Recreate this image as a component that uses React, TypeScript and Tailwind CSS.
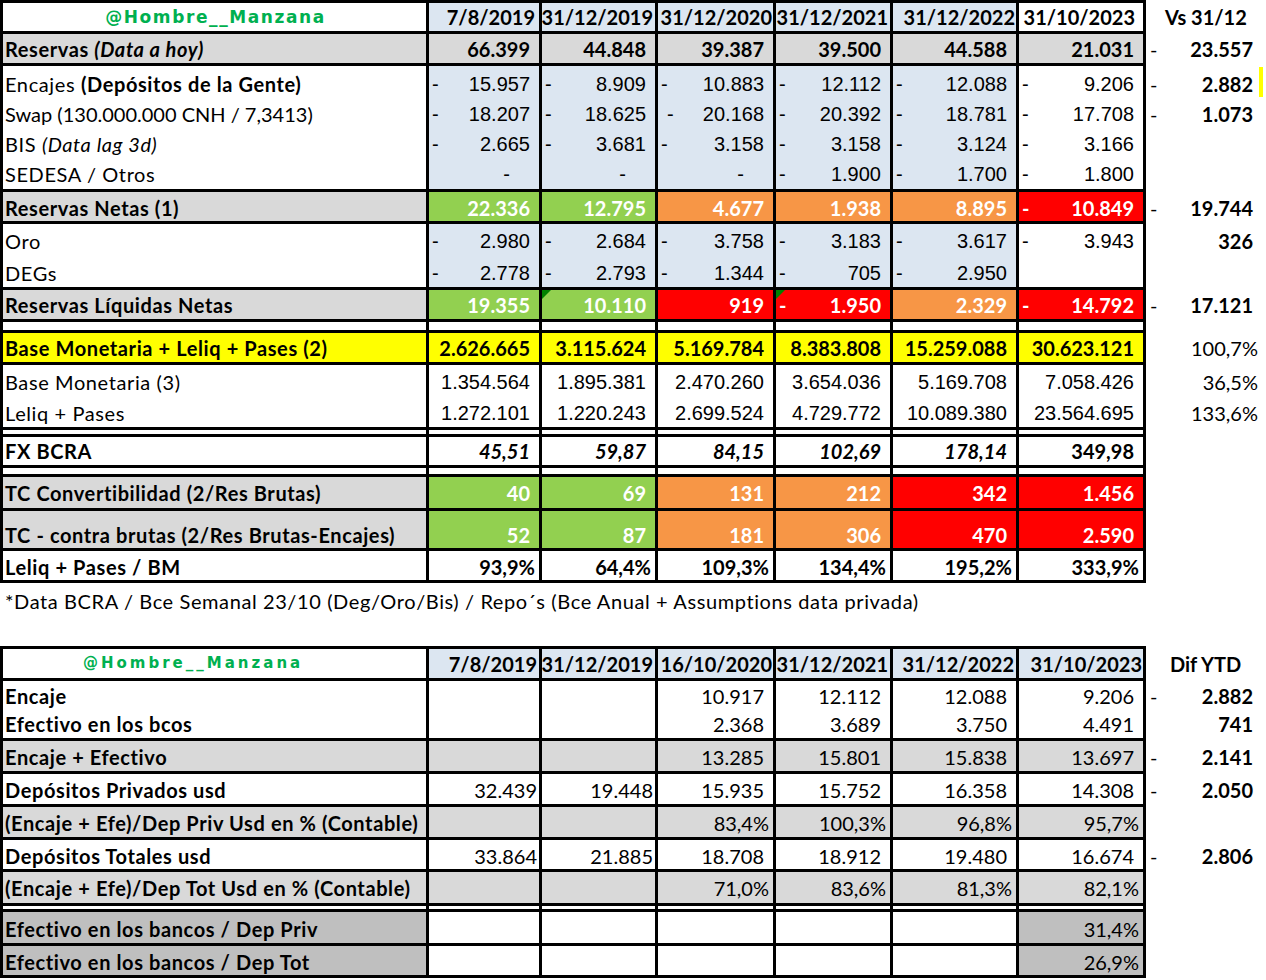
import React from "react";

const BL = "bg-[#dce6f1]";
const GR = "bg-[#d9d9d9]";
const DG = "bg-[#bfbfbf]";
const G = "bg-[#92d050]";
const O = "bg-[#f79646]";
const R = "bg-[#ff0000]";
const Y = "bg-[#ffff00]";
const W = "bg-white";

const CAL = "font-['Lato',sans-serif]";
const ARIAL = "font-['Liberation_Sans',Arial,sans-serif]";

const calB = `${CAL} font-bold text-black`;
const calBW = `${CAL} font-bold text-white`;
const calBI = `${CAL} font-bold italic text-black`;
const calR = `${CAL} text-black`;
const arial = `${ARIAL} text-black`;

type Block = {
  lines: string[];
  tail?: string;
  lift?: string;
  labelBg: string;
  label?: React.ReactNode[];
  bgs: string[];
  txt?: string;
  txts?: string[];
  prs?: string[];
  vals?: string[][];
  extra?: React.ReactNode[];
  marks?: number[];
};

const Handle = ({ small }: { small?: boolean }) => (
  <span
    className={`font-['DejaVu_Sans',sans-serif] font-bold leading-none text-[#00b050] ${
      small ? "text-[15px] tracking-[3px]" : "text-[17px] tracking-[1.6px]"
    }`}
  >
    @Hombre__Manzana
  </span>
);

// extra column helpers (outside the grid)
const xb = (v: string) =>
  v.startsWith("-|") ? (
    <div className={`flex h-full items-end justify-between pl-[4px] pr-[13px] ${calB}`}>
      <span className="font-normal">-</span>
      <span>{v.slice(2)}</span>
    </div>
  ) : (
    <div className={`flex h-full items-end justify-end pr-[13px] ${calB}`}>{v}</div>
  );
const xp = (v: string) => (
  <div className={`flex h-full items-end justify-end pr-[8px] ${calR}`}>{v}</div>
);
const xh = (v: string, pl: string) => (
  <div className={`flex h-full items-end ${pl} ${calB}`}>{v}</div>
);

const Val = ({ v, h, cls, pr }: { v?: string; h: string; cls: string; pr: string }) => {
  if (!v) return <div className={h} />;
  if (v === "~")
    return (
      <div className={`flex ${h} items-end justify-end pr-[29px] ${cls}`}>
        <span>-</span>
      </div>
    );
  if (v.startsWith("-|") || v.startsWith("->|"))
    return (
      <div
        className={`flex ${h} items-end justify-between ${v.startsWith("->") ? "pl-[9px]" : "pl-[3px]"} ${pr} ${cls}`}
      >
        <span>-</span>
        <span>{v.slice(v.indexOf("|") + 1)}</span>
      </div>
    );
  return (
    <div className={`flex ${h} items-end justify-end ${v.endsWith("%") ? "pr-[4px]" : pr} ${cls}`}>
      <span>{v}</span>
    </div>
  );
};

const Mark = () => (
  <svg className="absolute left-0 top-0" width="9" height="9" viewBox="0 0 9 9">
    <polygon points="0,0 9,0 0,9" fill="#008000" />
  </svg>
);

const BlockRow = ({ b }: { b: Block }) => {
  const lift = b.lift ?? "pb-[1px]";
  return (
    <div className="flex">
      <div className="grid w-[1146px] grid-cols-[423px_110px_113px_115px_114px_123px_124px] gap-x-[3px] border-x-[3px] border-b-[3px] border-black bg-black">
        <div className={`${b.labelBg} ${b.tail ?? ""}`}>
          {b.lines.map((h, j) => (
            <div
              key={j}
              className={`flex ${h} ${lift} items-end whitespace-nowrap pl-[2px] tracking-[0.6px] ${CAL} text-black`}
            >
              {b.label?.[j]}
            </div>
          ))}
        </div>
        {b.bgs.map((bg, c) => (
          <div key={c} className={`relative ${bg} ${b.tail ?? ""}`}>
            {b.marks?.includes(c) && <Mark />}
            {b.lines.map((h, j) => (
              <Val
                key={j}
                v={b.vals?.[c]?.[j]}
                h={`${h} ${lift}`}
                cls={b.txts?.[c] ?? b.txt ?? calB}
                pr={b.prs?.[c] ?? "pr-[9px]"}
              />
            ))}
          </div>
        ))}
      </div>
      <div className="w-[120px]">
        {b.lines.map((h, j) => (
          <div key={j} className={`relative ${h} ${lift}`}>
            {b.extra?.[j]}
          </div>
        ))}
      </div>
    </div>
  );
};

const Table = ({ blocks }: { blocks: Block[] }) => (
  <div>
    <div className="h-[3px] w-[1146px] bg-black" />
    {blocks.map((b, i) => (
      <BlockRow key={i} b={b} />
    ))}
  </div>
);

const all = (bg: string) => [bg, bg, bg, bg, bg, bg];
const col = (...v: string[]) => v.map((x) => [x]);

const top: Block[] = [
  {
    lines: ["h-[28px]"],
    lift: "pb-[2px]",
    labelBg: W,
    label: [
      <div className="flex h-full w-full items-center justify-center pt-[2px]">
        <Handle />
      </div>,
    ],
    bgs: [BL, BL, BL, BL, BL, W],
    txt: calB,
    prs: ["pr-[4px]", "pr-[2px]", "pr-[1px]", "pr-[2px]", "pr-[1px]", "pr-[8px]"],
    vals: col("7/8/2019", "31/12/2019", "31/12/2020", "31/12/2021", "31/12/2022", "31/10/2023"),
    extra: [xh("Vs 31/12", "pl-[19px]")],
  },
  {
    lines: ["h-[29px]"],
    lift: "pb-[2px]",
    labelBg: GR,
    label: [
      <b>
        Reservas <i>(Data a hoy)</i>
      </b>,
    ],
    bgs: all(GR),
    txt: calB,
    vals: col("66.399", "44.848", "39.387", "39.500", "44.588", "21.031"),
    extra: [xb("-|23.557")],
  },
  {
    lines: ["h-[30px]", "h-[30px]", "h-[30px]", "h-[30px]"],
    tail: "pb-[3px]",
    lift: "",
    labelBg: W,
    label: [
      <>
        Encajes&nbsp;<b>(Depósitos de la Gente)</b>
      </>,
      <span className="tracking-normal">Swap (130.000.000 CNH / 7,3413)</span>,
      <>
        BIS&nbsp;<i>(Data lag 3d)</i>
      </>,
      "SEDESA / Otros",
    ],
    bgs: [BL, BL, BL, BL, BL, W],
    txt: arial,
    vals: [
      ["-|15.957", "-|18.207", "-|2.665", "~"],
      ["-|8.909", "-|18.625", "-|3.681", "~"],
      ["-|10.883", "->|20.168", "-|3.158", "~"],
      ["-|12.112", "-|20.392", "-|3.158", "-|1.900"],
      ["-|12.088", "-|18.781", "-|3.124", "-|1.700"],
      ["-|9.206", "-|17.708", "-|3.166", "-|1.800"],
    ],
    extra: [
      <>
        {xb("-|2.882")}
        <span className="absolute right-[3px] top-[1px] h-[30px] w-[4px] bg-[#ffff00]" />
      </>,
      xb("-|1.073"),
    ],
  },
  {
    lines: ["h-[29px]"],
    labelBg: GR,
    label: [<b>Reservas Netas (1)</b>],
    bgs: [G, G, O, O, O, R],
    txt: calBW,
    vals: col("22.336", "12.795", "4.677", "1.938", "8.895", "-|10.849"),
    extra: [xb("-|19.744")],
  },
  {
    lines: ["h-[29px]", "h-[32px]"],
    tail: "pb-[2px]",
    lift: "",
    labelBg: W,
    label: ["Oro", "DEGs"],
    bgs: [BL, BL, BL, BL, BL, W],
    txt: arial,
    vals: [
      ["-|2.980", "-|2.778"],
      ["-|2.684", "-|2.793"],
      ["-|3.758", "-|1.344"],
      ["-|3.183", "-|705"],
      ["-|3.617", "-|2.950"],
      ["-|3.943", ""],
    ],
    extra: [xb("326")],
  },
  {
    lines: ["h-[29px]"],
    lift: "pb-[2px]",
    labelBg: GR,
    label: [<b>Reservas Líquidas Netas</b>],
    bgs: [G, G, R, R, O, R],
    txt: calBW,
    marks: [1, 3],
    vals: col("19.355", "10.110", "919", "-|1.950", "2.329", "-|14.792"),
    extra: [xb("-|17.121")],
  },
  { lines: ["h-[8px]"], lift: "", labelBg: W, bgs: all(W) },
  {
    lines: ["h-[29px]"],
    lift: "pb-[2px]",
    labelBg: Y,
    label: [<b>Base Monetaria + Leliq + Pases (2)</b>],
    bgs: all(Y),
    txt: calB,
    vals: col("2.626.665", "3.115.624", "5.169.784", "8.383.808", "15.259.088", "30.623.121"),
    extra: [xp("100,7%")],
  },
  {
    lines: ["h-[31px]", "h-[31px]"],
    lift: "pb-[2px]",
    labelBg: W,
    label: ["Base Monetaria (3)", "Leliq + Pases"],
    bgs: all(W),
    txt: arial,
    vals: [
      ["1.354.564", "1.272.101"],
      ["1.895.381", "1.220.243"],
      ["2.470.260", "2.699.524"],
      ["3.654.036", "4.729.772"],
      ["5.169.708", "10.089.380"],
      ["7.058.426", "23.564.695"],
    ],
    extra: [xp("36,5%"), xp("133,6%")],
  },
  { lines: ["h-[4px]"], lift: "", labelBg: W, bgs: all(W) },
  {
    lines: ["h-[28px]"],
    lift: "pb-[2px]",
    labelBg: W,
    label: [<b>FX BCRA</b>],
    bgs: all(W),
    txts: [calBI, calBI, calBI, calBI, calBI, calB],
    vals: col("45,51", "59,87", "84,15", "102,69", "178,14", "349,98"),
  },
  { lines: ["h-[6px]"], lift: "", labelBg: W, bgs: all(W) },
  {
    lines: ["h-[31px]"],
    lift: "pb-[3px]",
    labelBg: GR,
    label: [<b>TC Convertibilidad (2/Res Brutas)</b>],
    bgs: [G, G, O, O, R, R],
    txt: calBW,
    vals: col("40", "69", "131", "212", "342", "1.456"),
  },
  {
    lines: ["h-[37px]"],
    labelBg: GR,
    label: [<b>TC - contra brutas (2/Res Brutas-Encajes)</b>],
    bgs: [G, G, O, O, R, R],
    txt: calBW,
    vals: col("52", "87", "181", "306", "470", "2.590"),
  },
  {
    lines: ["h-[29px]"],
    labelBg: W,
    label: [<b>Leliq + Pases / BM</b>],
    bgs: all(W),
    txt: calB,
    vals: col("93,9%", "64,4%", "109,3%", "134,4%", "195,2%", "333,9%"),
  },
];

const p2 = ["pr-[2px]", "pr-[2px]"];

const bottom: Block[] = [
  {
    lines: ["h-[29px]"],
    lift: "pb-[2px]",
    labelBg: W,
    label: [
      <div className="flex h-full w-full items-center pl-[78px] pt-[2px]">
        <Handle small />
      </div>,
    ],
    bgs: all(BL),
    txt: calB,
    prs: ["pr-[2px]", "pr-[2px]", "pr-[1px]", "pr-[2px]", "pr-[2px]", "pr-[1px]"],
    vals: col("7/8/2019", "31/12/2019", "16/10/2020", "31/12/2021", "31/12/2022", "31/10/2023"),
    extra: [xh("Dif YTD", "pl-[24px]")],
  },
  {
    lines: ["h-[28px]", "h-[28px]"],
    tail: "pb-[1px]",
    labelBg: W,
    label: [<b>Encaje</b>, <b>Efectivo en los bcos</b>],
    bgs: all(W),
    txt: calR,
    vals: [[], [], ["10.917", "2.368"], ["12.112", "3.689"], ["12.088", "3.750"], ["9.206", "4.491"]],
    extra: [xb("-|2.882"), xb("741")],
  },
  {
    lines: ["h-[30px]"],
    lift: "pb-[2px]",
    labelBg: GR,
    label: [<b>Encaje + Efectivo</b>],
    bgs: all(GR),
    txt: calR,
    vals: col("", "", "13.285", "15.801", "15.838", "13.697"),
    extra: [xb("-|2.141")],
  },
  {
    lines: ["h-[30px]"],
    lift: "pb-[2px]",
    labelBg: W,
    label: [<b>Depósitos Privados usd</b>],
    bgs: all(W),
    txt: calR,
    prs: p2,
    vals: col("32.439", "19.448", "15.935", "15.752", "16.358", "14.308"),
    extra: [xb("-|2.050")],
  },
  {
    lines: ["h-[30px]"],
    lift: "pb-[2px]",
    labelBg: GR,
    label: [<b>(Encaje + Efe)/Dep Priv Usd en % (Contable)</b>],
    bgs: all(GR),
    txt: calR,
    vals: col("", "", "83,4%", "100,3%", "96,8%", "95,7%"),
  },
  {
    lines: ["h-[29px]"],
    labelBg: W,
    label: [<b>Depósitos Totales usd</b>],
    bgs: all(W),
    txt: calR,
    prs: p2,
    vals: col("33.864", "21.885", "18.708", "18.912", "19.480", "16.674"),
    extra: [xb("-|2.806")],
  },
  {
    lines: ["h-[31px]"],
    lift: "pb-[3px]",
    labelBg: GR,
    label: [<b>(Encaje + Efe)/Dep Tot Usd en % (Contable)</b>],
    bgs: all(GR),
    txt: calR,
    vals: col("", "", "71,0%", "83,6%", "81,3%", "82,1%"),
  },
  { lines: ["h-[3px]"], lift: "", labelBg: W, bgs: all(W) },
  {
    lines: ["h-[31px]"],
    lift: "pb-[2px]",
    labelBg: DG,
    label: [<b>Efectivo en los bancos / Dep Priv</b>],
    bgs: [W, W, W, W, W, DG],
    txt: calR,
    vals: col("", "", "", "", "", "31,4%"),
  },
  {
    lines: ["h-[29px]"],
    labelBg: DG,
    label: [<b>Efectivo en los bancos / Dep Tot</b>],
    bgs: [W, W, W, W, W, DG],
    txt: calR,
    vals: col("", "", "", "", "", "26,9%"),
  },
];

export default function App() {
  return (
    <div className="h-[980px] w-[1266px] overflow-hidden bg-white text-[20px] leading-[24px]">
      <Table blocks={top} />
      <div className={`h-[63px] whitespace-nowrap pl-[5px] pt-[6px] tracking-[0.6px] ${calR}`}>
        *Data BCRA / Bce Semanal 23/10 (Deg/Oro/Bis) / Repo´s (Bce Anual + Assumptions data privada)
      </div>
      <Table blocks={bottom} />
    </div>
  );
}
